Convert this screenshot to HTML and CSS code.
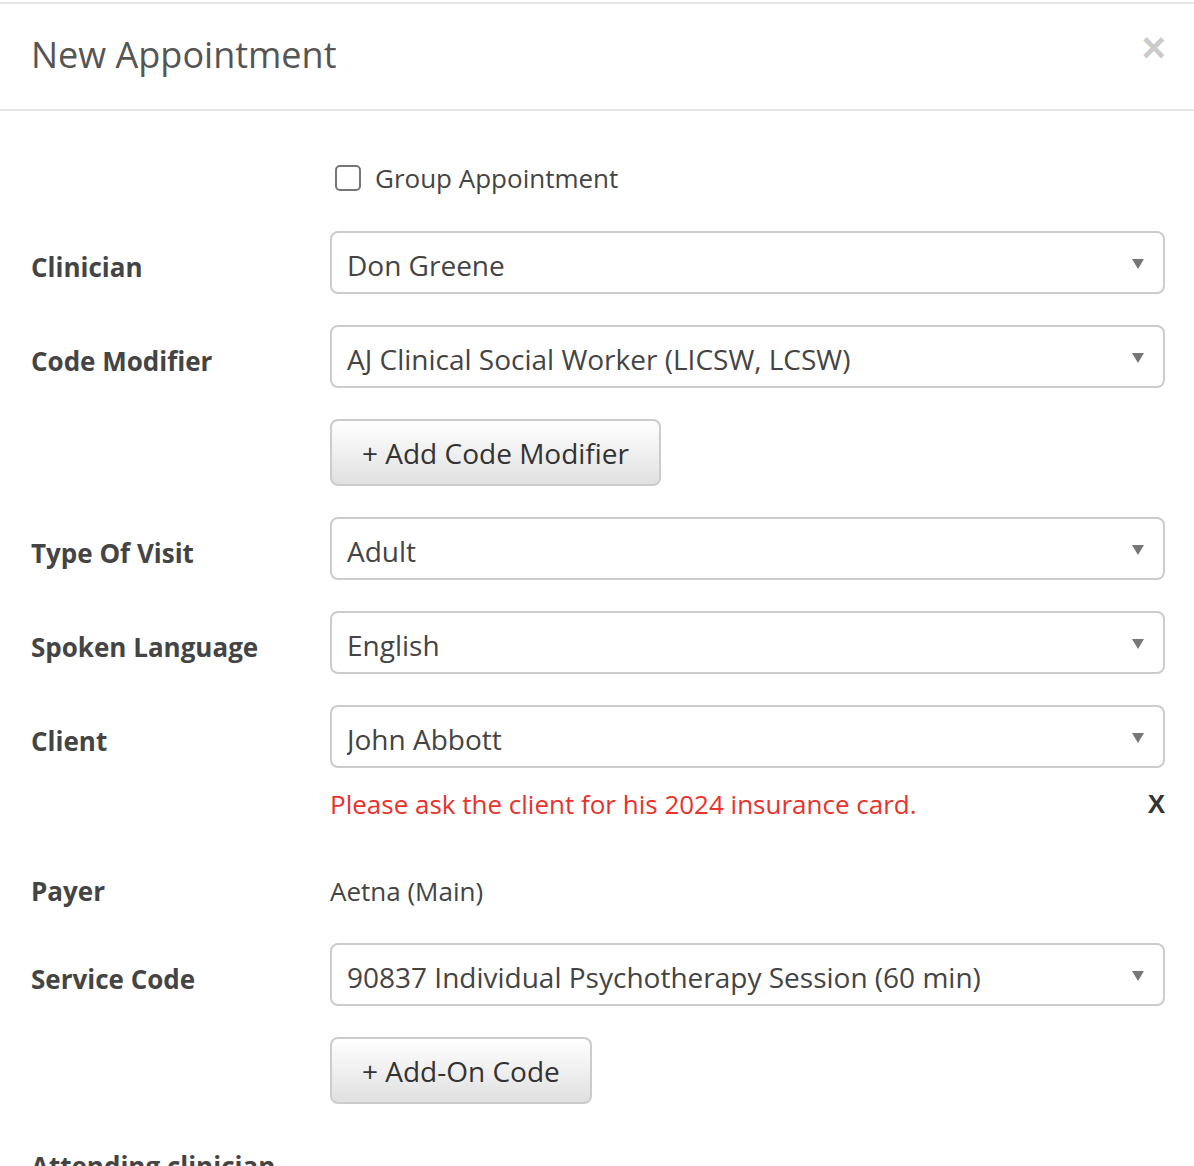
FILE: index.html
```html
<!DOCTYPE html>
<html lang="en">
<head>
  <meta charset="UTF-8">
  <title>New Appointment</title>
  <link rel="stylesheet" href="styles.css">
</head>
<body>
  <div class="modal">
    <div class="modal-header">
      <h1 class="modal-title">New Appointment</h1>
      <button class="close" type="button">&times;</button>
    </div>

    <form class="modal-body">
      <div class="row check-row">
        <div class="label"></div>
        <label class="check"><span class="box"></span>Group Appointment</label>
      </div>

      <div class="row">
        <div class="label">Clinician</div>
        <div class="select-wrap"><select><option>Don Greene</option></select></div>
      </div>

      <div class="row">
        <div class="label">Code Modifier</div>
        <div class="select-wrap"><select><option>AJ Clinical Social Worker (LICSW, LCSW)</option></select></div>
      </div>

      <div class="row">
        <div class="label"></div>
        <button class="btn" type="button">+ Add Code Modifier</button>
      </div>

      <div class="row">
        <div class="label">Type Of Visit</div>
        <div class="select-wrap"><select><option>Adult</option></select></div>
      </div>

      <div class="row">
        <div class="label">Spoken Language</div>
        <div class="select-wrap"><select><option>English</option></select></div>
      </div>

      <div class="row tight">
        <div class="label">Client</div>
        <div class="select-wrap"><select><option>John Abbott</option></select></div>
      </div>

      <div class="row notice-row">
        <div class="label"></div>
        <div class="notice">
          <span class="warn">Please ask the client for his 2024 insurance card.</span>
          <span class="dismiss">X</span>
        </div>
      </div>

      <div class="row text-row">
        <div class="label">Payer</div>
        <div class="value">Aetna (Main)</div>
      </div>

      <div class="row">
        <div class="label">Service Code</div>
        <div class="select-wrap"><select><option>90837 Individual Psychotherapy Session (60 min)</option></select></div>
      </div>

      <div class="row">
        <div class="label"></div>
        <button class="btn" type="button">+ Add-On Code</button>
      </div>

      <div class="row text-row section">
        <div class="label">Attending clinician</div>
      </div>
    </form>
  </div>
</body>
</html>
```

FILE: styles.css
```css
html, body {
  margin: 0;
  background: #fff;
}
body {
  font-family: 'Open Sans', 'Noto Sans', sans-serif;
  color: #444;
  overflow: hidden;
}
.modal {
  border-top: 2px solid #e5e5e5;
  margin-top: 2px;
}
.modal-header {
  display: flex;
  justify-content: space-between;
  align-items: center;
  height: 105px;
  padding: 0 28px 0 31px;
  border-bottom: 2px solid #e5e5e5;
}
.modal-title {
  margin: 0;
  font-size: 36px;
  font-weight: 400;
  color: #555;
  line-height: 1;
  padding-bottom: 4px;
}
.close {
  border: none;
  background: none;
  padding: 0;
  font-family: 'Liberation Sans', sans-serif;
  font-size: 42px;
  font-weight: 700;
  line-height: 1;
  color: #000;
  opacity: 0.2;
  margin-top: -17px;
  cursor: pointer;
}
.modal-body {
  padding: 46px 29px 0 31px;
}
.row {
  display: flex;
  align-items: center;
  margin-bottom: 31px;
}
.row.tight {
  margin-bottom: 18px;
}
.label {
  width: 299px;
  flex: none;
  font-size: 26px;
  font-weight: 700;
  color: #444;
  padding-top: 9px;
}
.check-row {
  height: 40px;
  margin-bottom: 34px;
}
.check {
  display: flex;
  align-items: center;
  font-size: 26px;
  color: #444;
  padding-top: 2px;
}
.box {
  width: 22px;
  height: 22px;
  border: 2px solid #767676;
  border-radius: 5px;
  margin: 0 14px 0 5px;
}
.select-wrap {
  flex: 1;
  position: relative;
}
.select-wrap select {
  appearance: none;
  -webkit-appearance: none;
  width: 100%;
  height: 63px;
  border: 2px solid #ccc;
  border-radius: 8px;
  background: #fff;
  padding: 5px 50px 0 15px;
  font-family: inherit;
  font-size: 28px;
  color: #444;
}
.select-wrap::after {
  content: "";
  position: absolute;
  right: 21px;
  top: 28px;
  border-left: 6px solid transparent;
  border-right: 6px solid transparent;
  border-top: 10px solid #777;
  pointer-events: none;
}
.btn {
  height: 67px;
  padding: 0 30px;
  border: 2px solid #ccc;
  border-radius: 8px;
  background: linear-gradient(#fff, #e0e0e0);
  font-family: inherit;
  font-size: 28px;
  color: #333;
  cursor: pointer;
}
.notice-row {
  height: 36px;
  margin-bottom: 51px;
}
.notice {
  flex: 1;
  display: flex;
  justify-content: space-between;
  align-items: center;
  font-size: 26px;
}
.warn {
  color: #e8322b;
}
.dismiss {
  font-family: 'Liberation Sans', sans-serif;
  font-weight: 700;
  color: #333;
}
.text-row {
  height: 36px;
  margin-bottom: 34px;
}
.text-row .label {
  padding-top: 0;
}
.value {
  font-size: 26px;
  color: #444;
}
.section {
  margin-top: 44px;
}
```
